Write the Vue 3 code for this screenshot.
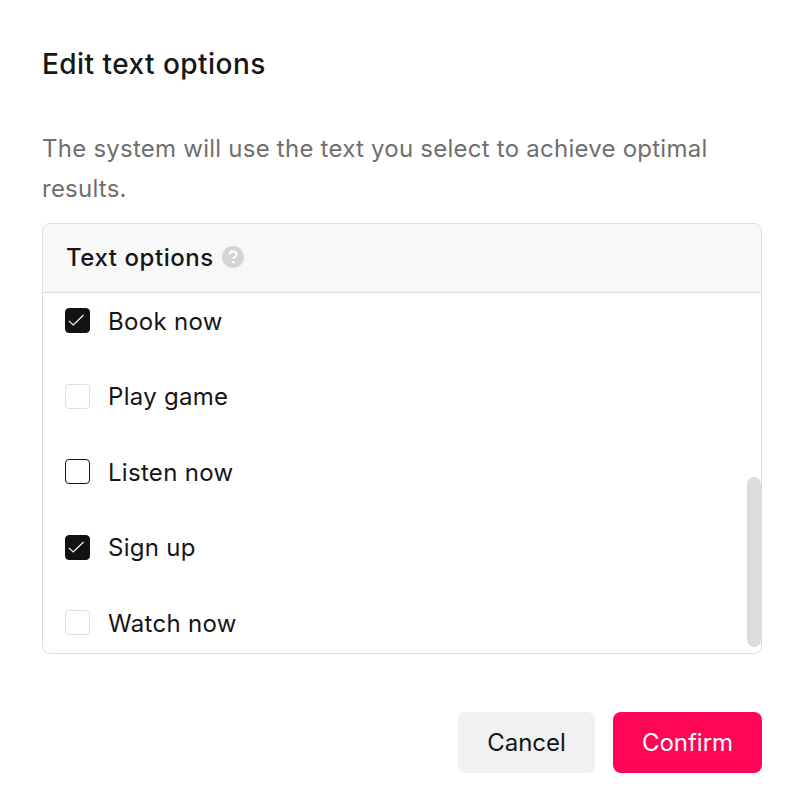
<script setup>
const options = [
  { label: 'Book now', state: 'checked' },
  { label: 'Play game', state: 'idle' },
  { label: 'Listen now', state: 'hover' },
  { label: 'Sign up', state: 'checked' },
  { label: 'Watch now', state: 'idle' },
]
</script>

<template>
  <div class="modal">
    <h1 class="title">Edit text options</h1>
    <p class="desc">The system will use the text you select to achieve optimal results.</p>
    <section class="box">
      <header class="box-head">
        <span>Text options</span>
        <svg class="help" viewBox="0 0 22 22" aria-hidden="true">
          <circle cx="11" cy="11" r="11" fill="#d4d4d4" />
          <path d="M7.6 8.6c0-2 1.5-3.2 3.5-3.2s3.4 1.2 3.4 2.9c0 1.4-.8 2.1-1.8 2.8-.9.6-1.3 1-1.3 2" fill="none" stroke="#fff" stroke-width="2.1" />
          <circle cx="11.3" cy="16.2" r="1.4" fill="#fff" />
        </svg>
      </header>
      <div class="list">
        <label v-for="o in options" :key="o.label" class="row">
          <span class="check" :class="o.state">
            <svg v-if="o.state === 'checked'" viewBox="0 0 25 25" aria-hidden="true">
              <path d="M3.8 12.8l4.5 4.2 10.2-10" fill="none" stroke="#fff" stroke-width="1.1" />
            </svg>
          </span>
          <span class="label">{{ o.label }}</span>
        </label>
        <div class="thumb"></div>
      </div>
    </section>
    <footer class="actions">
      <button class="btn cancel">Cancel</button>
      <button class="btn confirm">Confirm</button>
    </footer>
  </div>
</template>

<style>
html, body { background: #fff; }
</style>

<style scoped>
.modal {
  width: 800px;
  height: 812px;
  box-sizing: border-box;
  padding: 48px 38px 0 42px;
  background: #fff;
  font-family: Inter, "Liberation Sans", sans-serif;
  color: #161823;
}
.title {
  margin: 0;
  font-size: 28px;
  line-height: 32px;
  font-weight: 500;
  letter-spacing: .45px;
  color: #161616;
}
.desc {
  margin: 49px 0 0;
  font-size: 24px;
  line-height: 40px;
  letter-spacing: .24px;
  color: #6f6f6f;
}
.box {
  margin-top: 14px;
  border: 1px solid #dcdcdc;
  border-radius: 8px;
  overflow: hidden;
}
.box-head {
  display: flex;
  align-items: center;
  gap: 8px;
  box-sizing: border-box;
  height: 69px;
  padding: 0 0 2px 23px;
  background: #f8f8f8;
  border-bottom: 1px solid #dcdcdc;
  font-size: 24px;
  font-weight: 500;
  letter-spacing: .55px;
  color: #161616;
}
.help { width: 22px; height: 22px; }
.list {
  position: relative;
  height: 360px;
  box-sizing: border-box;
  padding: 15px 0 0 22px;
  display: flex;
  flex-direction: column;
  gap: 50.5px;
  overflow: hidden;
}
.row {
  display: flex;
  align-items: center;
  gap: 18px;
  height: 25px;
  font-size: 24px;
  letter-spacing: .3px;
  color: #161616;
}
.label { padding-top: 1px; }
.check {
  width: 25px;
  height: 25px;
  box-sizing: border-box;
  border-radius: 4px;
  border: 1px solid #dedede;
  background: #fff;
}
.check svg { display: block; width: 25px; height: 25px; margin: -1px; }
.check.checked { background: #121212; border-color: #121212; }
.check.hover { border-color: #161616; }
.thumb {
  position: absolute;
  right: 0;
  top: 184px;
  width: 14px;
  height: 170px;
  border-radius: 7px;
  background: #dcdcdc;
}
.actions {
  display: flex;
  justify-content: flex-end;
  gap: 18px;
  margin-top: 58px;
}
.btn {
  height: 61px;
  border: 0;
  border-radius: 8px;
  font: 400 24px Inter, "Liberation Sans", sans-serif;
}
.cancel { width: 137px; background: #f1f1f1; color: #161616; }
.confirm { width: 149px; background: #fe0656; color: #fff; }
</style>
